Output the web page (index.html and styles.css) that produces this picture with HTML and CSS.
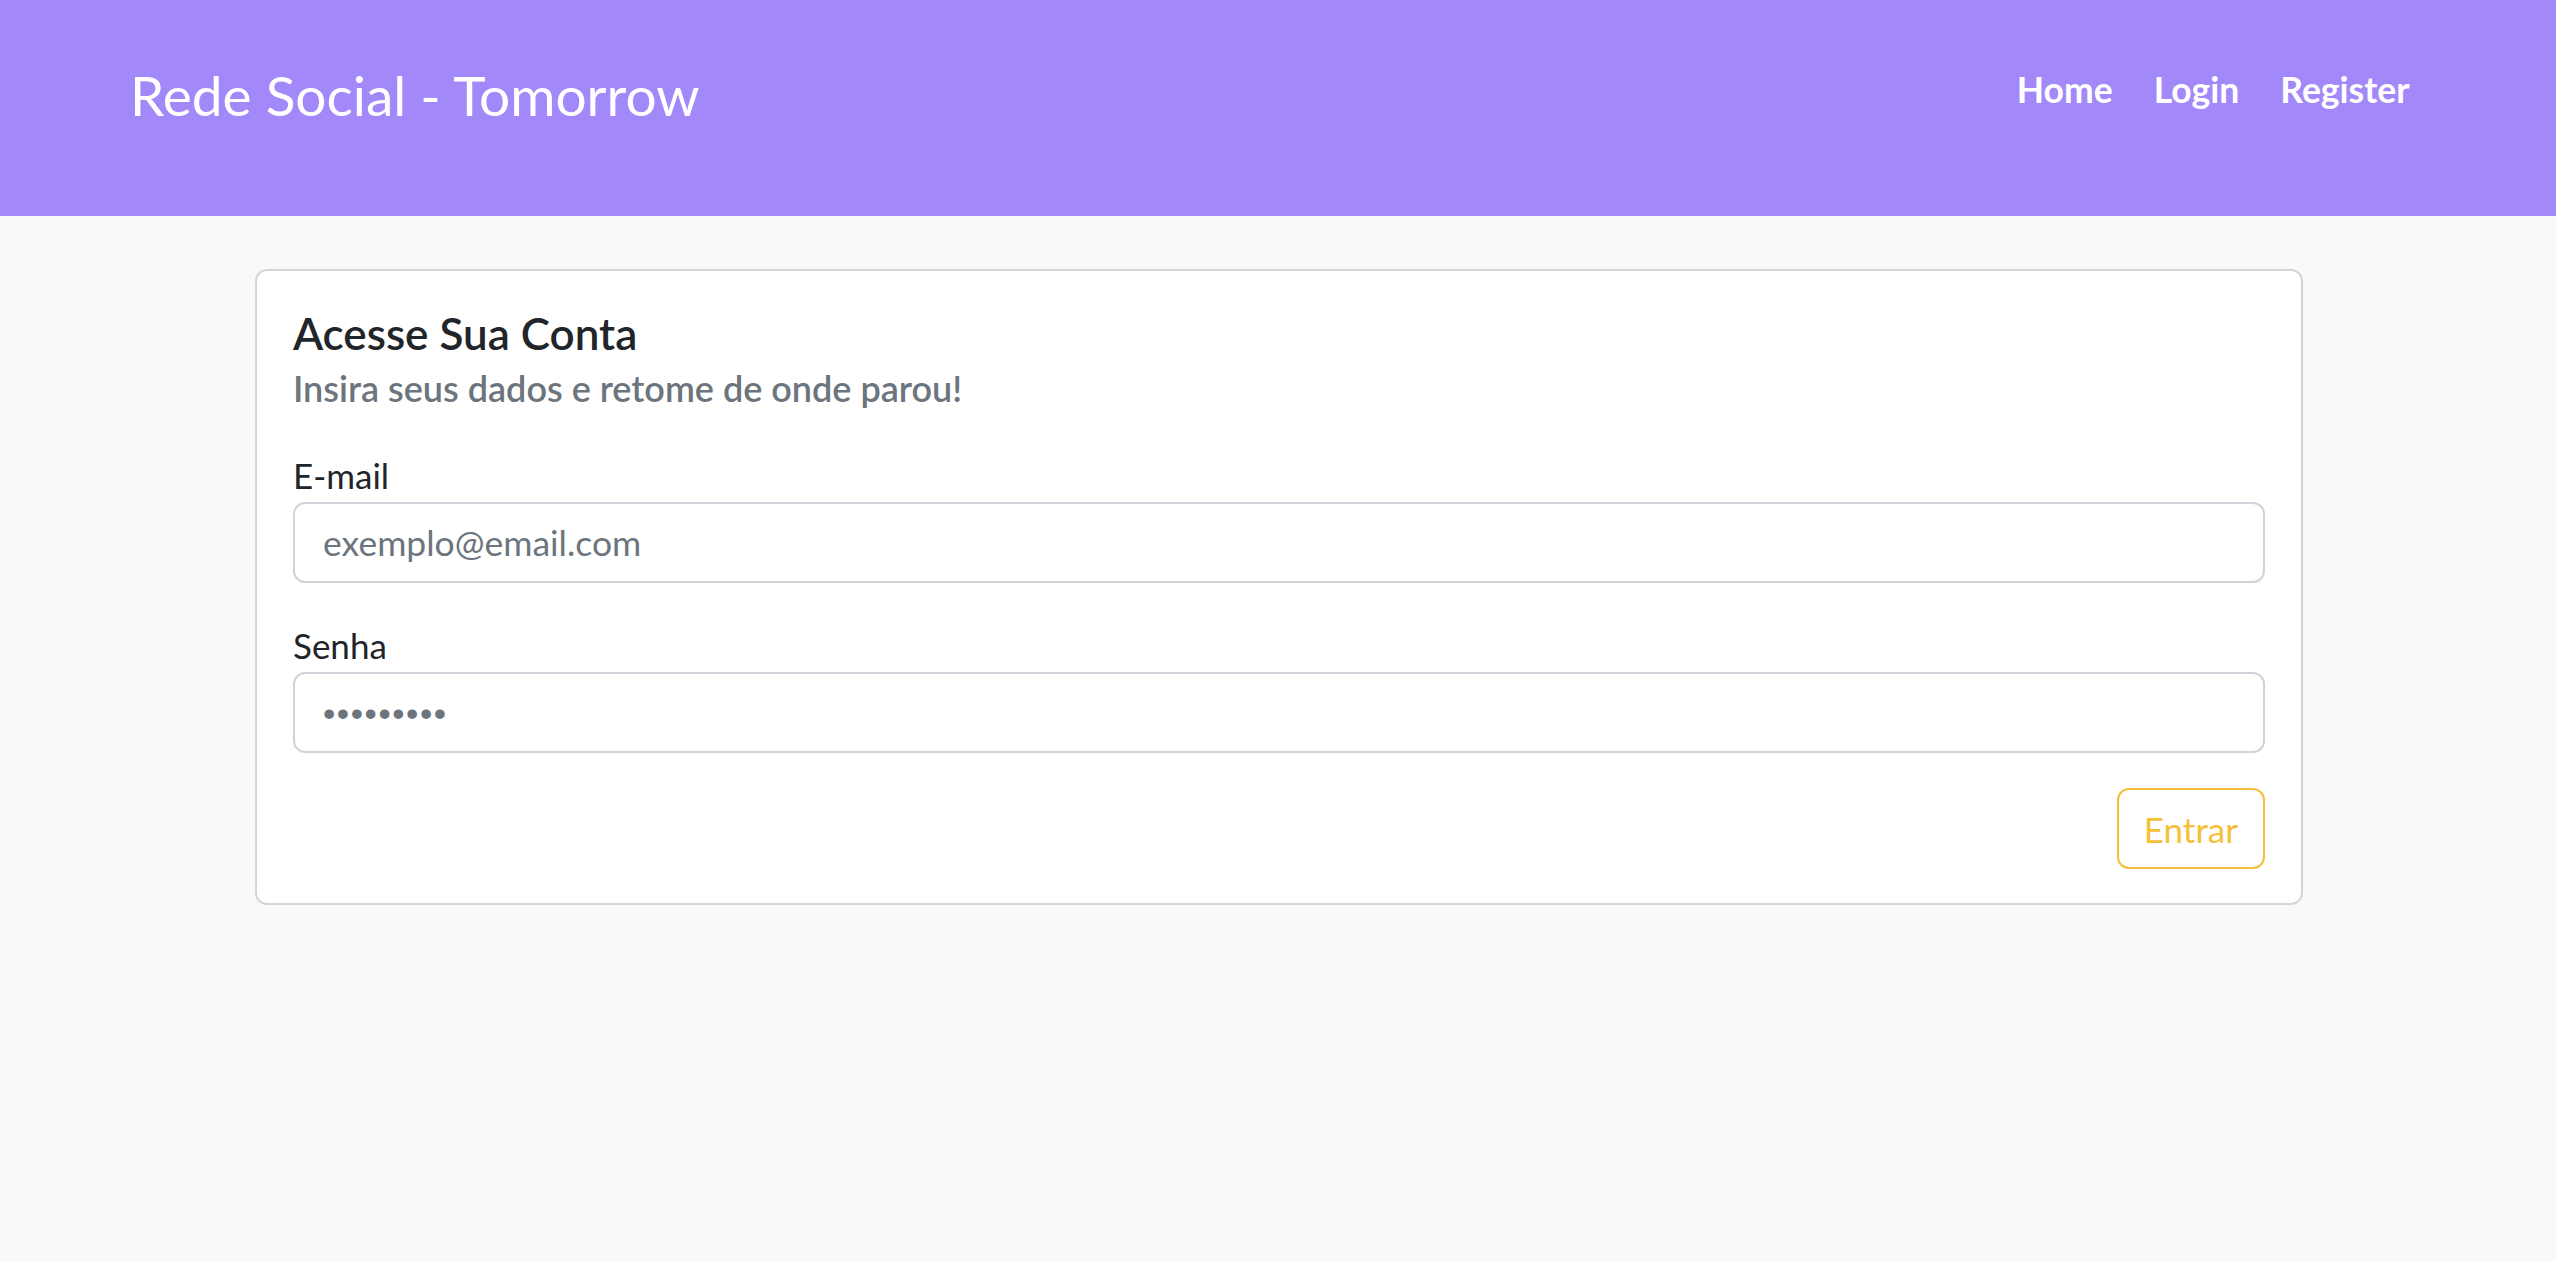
FILE: index.html
```html
<!DOCTYPE html>
<html lang="pt-BR">
<head>
<meta charset="utf-8">
<title>Rede Social - Tomorrow</title>
<link rel="stylesheet" href="styles.css">
</head>
<body>
<header class="topbar">
  <a class="brand" href="#">Rede Social - Tomorrow</a>
  <nav class="nav">
    <a class="nav-link" href="#">Home</a>
    <a class="nav-link" href="#">Login</a>
    <a class="nav-link" href="#">Register</a>
  </nav>
</header>
<main class="main">
  <section class="card">
    <h5 class="card-title">Acesse Sua Conta</h5>
    <h6 class="card-subtitle">Insira seus dados e retome de onde parou!</h6>
    <form class="form">
      <div class="field">
        <label class="form-label" for="email">E-mail</label>
        <input class="form-control" type="email" id="email" placeholder="exemplo@email.com">
      </div>
      <div class="field">
        <label class="form-label" for="senha">Senha</label>
        <input class="form-control form-password" type="password" id="senha" placeholder="•••••••••">
      </div>
      <div class="actions">
        <button class="btn-outline-warning" type="button">Entrar</button>
      </div>
    </form>
  </section>
</main>
</body>
</html>
```

FILE: styles.css
```css
* { box-sizing: border-box; }

html, body {
  margin: 0;
  padding: 0;
}

body {
  background: #f8f9fa;
  font-family: "Lato", "Open Sans", "Noto Sans", sans-serif;
  color: #212529;
  min-height: 1262px;
}

.topbar {
  height: 216px;
  background: #a388f9;
  display: flex;
  justify-content: space-between;
  align-items: flex-start;
  padding: 62px 126px 0 130px;
}

.brand {
  color: #ffffff;
  text-decoration: none;
  font-size: 55px;
  line-height: 66px;
  font-weight: 400;
}

.nav {
  display: flex;
  margin-top: 2px;
}

.nav-link {
  color: #ffffff;
  text-decoration: none;
  font-weight: 700;
  font-size: 35.5px;
  line-height: 52px;
  padding: 0 20.5px;
}

.main {
  padding: 53px 0 0 2px;
}

.card {
  width: 2048px;
  margin: 0 auto;
  background: #ffffff;
  border: 2px solid #d4d5d6;
  border-radius: 12px;
  padding: 36px 36px 34px 36px;
}

.card-title {
  margin: 0 0 8px 0;
  font-size: 44px;
  line-height: 52px;
  font-weight: 600;
  color: #212529;
}

.card-subtitle {
  margin: 0;
  font-size: 36px;
  line-height: 43px;
  font-weight: 600;
  color: #6c757d;
}

.form {
  margin-top: 39px;
  display: flex;
  flex-direction: column;
}

.field {
  display: flex;
  flex-direction: column;
  margin-bottom: 36px;
}

.form-label {
  font-size: 35px;
  line-height: 52px;
  margin-bottom: 1px;
  color: #212529;
}

.form-control {
  height: 81px;
  width: 100%;
  border: 2px solid #ced4da;
  border-radius: 12px;
  padding: 0 28px;
  font-family: inherit;
  font-size: 35.5px;
  color: #212529;
  background: #ffffff;
  outline: none;
}

.form-control::placeholder {
  color: #6c757d;
  opacity: 1;
}

.form-password::placeholder {
  font-family: "Liberation Sans", "DejaVu Sans", sans-serif;
  font-size: 35px;
  letter-spacing: 1.6px;
}

.actions {
  display: flex;
  justify-content: flex-end;
  margin-top: -1px;
}

.btn-outline-warning {
  height: 81px;
  padding: 0 25px;
  background: transparent;
  border: 2px solid #f5bf3a;
  border-radius: 12px;
  color: #f5bf3a;
  font-family: inherit;
  font-size: 35px;
  cursor: pointer;
}
```
